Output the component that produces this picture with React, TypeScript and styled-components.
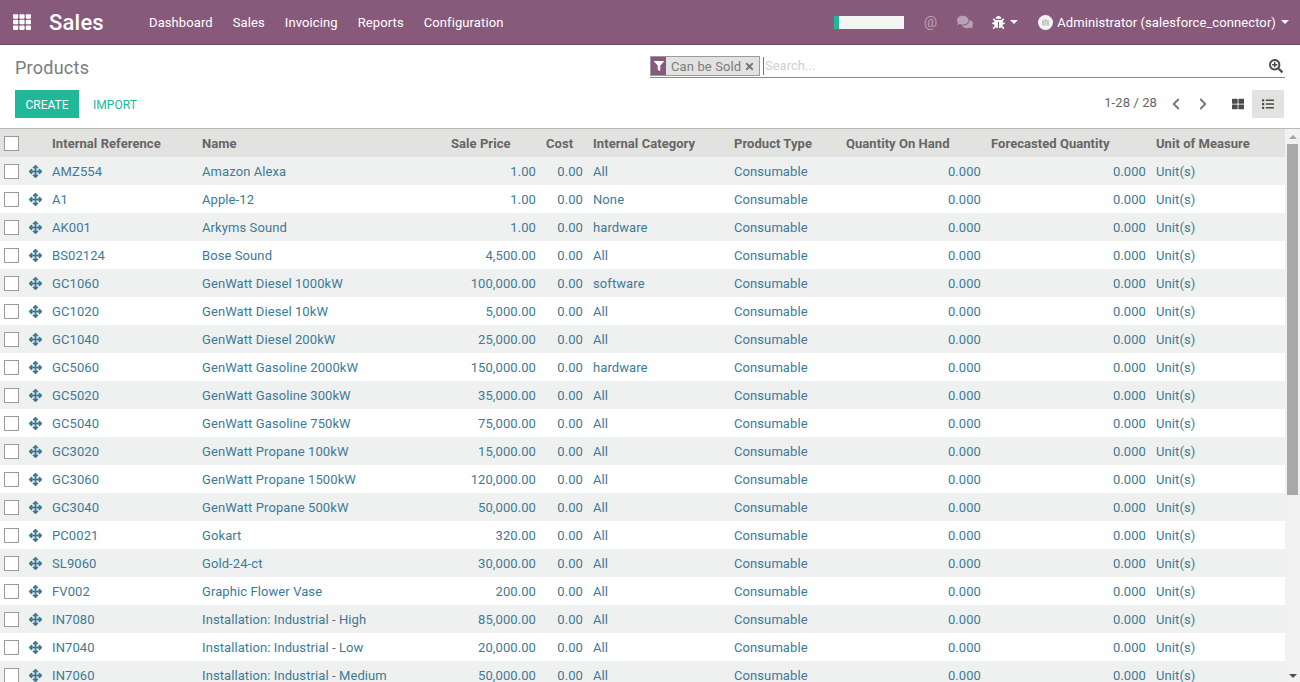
import styled, { createGlobalStyle } from "styled-components";
import {
  FaArrowsAlt,
  FaBug,
  FaCamera,
  FaComments,
  FaFilter,
  FaList,
  FaSearchPlus,
  FaTh,
  FaThLarge,
  FaTimes,
} from "react-icons/fa";
import { ChevronLeft, ChevronRight } from "lucide-react";

const GlobalStyle = createGlobalStyle`
  html, body {
    margin: 0;
    padding: 0;
    height: 100%;
    overflow: hidden;
    background: #ffffff;
    font-family: "Roboto", "Liberation Sans", sans-serif;
    font-size: 13px;
    color: #4c4c4c;
  }
`;

const Page = styled.div`
  display: flex;
  flex-direction: column;
  height: 682px;
  overflow: hidden;
`;

// top bar //
const TopBar = styled.div`
  flex: none;
  height: 44px;
  display: flex;
  align-items: center;
  background: #875a7b;
  border-bottom: 1px solid #6f4a66;
  color: #ffffff;
`;
const AppsButton = styled.div`
  display: flex;
  margin-left: 13px;
  font-size: 18px;
`;
const Brand = styled.div`
  margin-left: 18px;
  width: 100px;
  font-size: 22px;
  font-weight: 500;
  letter-spacing: 0.2px;
`;
const Menu = styled.div`
  display: flex;
  gap: 20px;
`;
const MenuItem = styled.div`
  font-size: 13px;
  letter-spacing: 0.1px;
`;
const TopRight = styled.div`
  display: flex;
  align-items: center;
  margin-left: auto;
`;
const Progress = styled.div`
  width: 65px;
  height: 13px;
  background: #f5f5f3;
  border-left: 5px solid #21b799;
  margin-right: 20px;
`;
const MutedIcon = styled.div<{ $gap: number; $size: number }>`
  display: flex;
  align-items: center;
  font-size: ${(p) => p.$size}px;
  color: #b9a0b4;
  margin-right: ${(p) => p.$gap}px;
`;
const BugButton = styled.div`
  display: flex;
  align-items: center;
  gap: 5px;
  font-size: 13px;
  margin-right: 20px;
`;
const Caret = styled.span`
  width: 0;
  height: 0;
  border-left: 4px solid transparent;
  border-right: 4px solid transparent;
  border-top: 4px solid currentColor;
`;
const Avatar = styled.div`
  width: 15px;
  height: 15px;
  border-radius: 50%;
  background: #f4f2f3;
  color: #c4c4c4;
  font-size: 7px;
  display: flex;
  align-items: center;
  justify-content: center;
  margin-right: 4px;
`;
const UserName = styled.div`
  font-size: 13px;
  letter-spacing: 0.09px;
  margin-right: 5px;
`;
const UserMenu = styled.div`
  display: flex;
  align-items: center;
  margin-right: 11px;
`;

// control panel //
const ControlPanel = styled.div`
  flex: none;
  height: 83px;
  display: grid;
  grid-template-columns: 650px 1fr;
  grid-template-rows: 45px 38px;
  padding: 0 15px;
  box-sizing: border-box;
  width: 100%;
`;
const Title = styled.div`
  font-size: 18px;
  letter-spacing: 0.25px;
  color: #7c7c7c;
  padding-top: 12px;
  line-height: 22px;
`;
const SearchBar = styled.div`
  display: flex;
  align-items: flex-start;
  height: 21px;
  margin: 11px 0 0 -15px;
  border-bottom: 1px solid #8a8a8a;
`;
const Facet = styled.div`
  display: flex;
  align-items: center;
  height: 20px;
  width: 110px;
  box-sizing: border-box;
  background: #e2e2e0;
  border: 1px solid #9b9b9b;
  color: #7c7c7c;
  font-size: 13px;
  letter-spacing: 0.12px;
`;
const FacetIcon = styled.div`
  display: flex;
  align-items: center;
  justify-content: center;
  width: 15px;
  height: 18px;
  background: #875a7b;
  color: #ffffff;
  font-size: 10px;
  margin-right: 5px;
`;
const FacetClose = styled.span`
  display: flex;
  margin-left: 3px;
  font-size: 11px;
  color: #777777;
`;
const SearchInput = styled.div`
  flex: 1;
  margin-left: 3px;
  padding-left: 1px;
  height: 18px;
  margin-top: 1px;
  line-height: 18px;
  border-left: 1px solid #777777;
  color: #cfcfcf;
  font-size: 13px;
`;
const SearchIcon = styled.div`
  display: flex;
  font-size: 14px;
  color: #4c4c4c;
  margin: 3px 2px 0 0;
`;
const Buttons = styled.div`
  display: flex;
  align-items: center;
  height: 28px;
`;
const CreateButton = styled.div`
  width: 64px;
  height: 28px;
  box-sizing: border-box;
  padding-top: 1px;
  background: #21b799;
  color: #ffffff;
  font-size: 12px;
  display: flex;
  align-items: center;
  justify-content: center;
`;
const ImportButton = styled.div`
  margin-left: 14px;
  padding-top: 1px;
  color: #21b799;
  font-size: 12px;
  letter-spacing: 0.05px;
`;
const Tools = styled.div`
  display: flex;
  align-items: center;
  height: 28px;
  margin-right: 1px;
`;
const Pager = styled.div`
  margin-left: auto;
  font-size: 13px;
  letter-spacing: 0.1px;
  color: #666666;
  margin-right: 10px;
  position: relative;
  top: -2px;
`;
const PagerArrow = styled.div`
  display: flex;
  color: #777777;
  margin-right: 9px;
`;
const ViewButton = styled.div<{ $active?: boolean }>`
  width: 32px;
  height: 28px;
  display: flex;
  align-items: center;
  justify-content: center;
  font-size: 12px;
  color: #4c4c4c;
  background: ${(p) => (p.$active ? "#e2e2e0" : "transparent")};
`;
const KanbanButton = styled(ViewButton)`
  box-sizing: border-box;
  padding-left: 3px;
`;

// list //
const ListArea = styled.div`
  flex: 1;
  min-height: 0;
  display: flex;
  border-top: 1px solid #b9b9b9;
  overflow: hidden;
`;
const TableWrap = styled.div`
  flex: 1;
  min-width: 0;
  overflow: hidden;
`;
const Table = styled.table`
  width: 1285px;
  table-layout: fixed;
  border-collapse: collapse;
  font-size: 13px;
`;
const HeadRow = styled.tr`
  height: 28px;
  background: #e2e2e0;
`;
const Th = styled.th`
  padding: 0 5px;
  text-align: left;
  font-weight: 700;
  letter-spacing: 0.05px;
  color: #666666;
  white-space: nowrap;
`;
const Row = styled.tr`
  height: 28px;
  background: #ffffff;
  &:nth-child(odd) {
    background: #eff0f0;
  }
`;
const Td = styled.td<{ $num?: boolean }>`
  padding: 0 5px;
  color: #3c7b97;
  letter-spacing: 0.09px;
  text-align: ${(p) => (p.$num ? "right" : "left")};
  white-space: nowrap;
  overflow: hidden;
`;
const CheckCell = styled.td`
  padding: 0 0 0 4px;
`;
const CheckHead = styled.th`
  padding: 0 0 0 4px;
`;
const Check = styled.div`
  width: 13px;
  height: 13px;
  background: #ffffff;
  border: 1px solid #9a9a9a;
`;
const HandleCell = styled.td`
  padding: 0 0 0 5px;
  color: #3c7b97;
  font-size: 13px;
  line-height: 0;
  svg {
    stroke: currentColor;
    stroke-width: 16;
  }
`;

// scrollbar //
const Scrollbar = styled.div`
  flex: none;
  width: 15px;
  display: flex;
  flex-direction: column;
  align-items: center;
  background: #f1f1f1;
`;
const ArrowUp = styled.div`
  flex: none;
  margin: 6px 0 5px;
  border-left: 4px solid transparent;
  border-right: 4px solid transparent;
  border-bottom: 4px solid #a3a3a3;
`;
const Thumb = styled.div`
  flex: none;
  width: 11px;
  height: 351px;
  background: #a8a8a8;
`;
const ArrowDown = styled.div`
  margin-top: auto;
  margin-bottom: 4px;
  border-left: 4px solid transparent;
  border-right: 4px solid transparent;
  border-top: 4px solid #505050;
`;

const widths = [24, 23, 150, 249, 95, 47, 141, 112, 145, 165, 134];
const headers = [
  "Internal Reference",
  "Name",
  "Sale Price",
  "Cost",
  "Internal Category",
  "Product Type",
  "Quantity On Hand",
  "Forecasted Quantity",
  "Unit of Measure",
];

const products = [
  ["AMZ554", "Amazon Alexa", "1.00", "All"],
  ["A1", "Apple-12", "1.00", "None"],
  ["AK001", "Arkyms Sound", "1.00", "hardware"],
  ["BS02124", "Bose Sound", "4,500.00", "All"],
  ["GC1060", "GenWatt Diesel 1000kW", "100,000.00", "software"],
  ["GC1020", "GenWatt Diesel 10kW", "5,000.00", "All"],
  ["GC1040", "GenWatt Diesel 200kW", "25,000.00", "All"],
  ["GC5060", "GenWatt Gasoline 2000kW", "150,000.00", "hardware"],
  ["GC5020", "GenWatt Gasoline 300kW", "35,000.00", "All"],
  ["GC5040", "GenWatt Gasoline 750kW", "75,000.00", "All"],
  ["GC3020", "GenWatt Propane 100kW", "15,000.00", "All"],
  ["GC3060", "GenWatt Propane 1500kW", "120,000.00", "All"],
  ["GC3040", "GenWatt Propane 500kW", "50,000.00", "All"],
  ["PC0021", "Gokart", "320.00", "All"],
  ["SL9060", "Gold-24-ct", "30,000.00", "All"],
  ["FV002", "Graphic Flower Vase", "200.00", "All"],
  ["IN7080", "Installation: Industrial - High", "85,000.00", "All"],
  ["IN7040", "Installation: Industrial - Low", "20,000.00", "All"],
  ["IN7060", "Installation: Industrial - Medium", "50,000.00", "All"],
];

const App = () => {
  return (
    <Page>
      <GlobalStyle />
      <TopBar>
        <AppsButton>
          <FaTh />
        </AppsButton>
        <Brand>Sales</Brand>
        <Menu>
          <MenuItem>Dashboard</MenuItem>
          <MenuItem>Sales</MenuItem>
          <MenuItem>Invoicing</MenuItem>
          <MenuItem>Reports</MenuItem>
          <MenuItem>Configuration</MenuItem>
        </Menu>
        <TopRight>
          <Progress />
          <MutedIcon $gap={20} $size={15}>
            @
          </MutedIcon>
          <MutedIcon $gap={19} $size={16}>
            <FaComments />
          </MutedIcon>
          <BugButton>
            <FaBug />
            <Caret />
          </BugButton>
          <UserMenu>
            <Avatar>
              <FaCamera />
            </Avatar>
            <UserName>Administrator (salesforce_connector)</UserName>
            <Caret />
          </UserMenu>
        </TopRight>
      </TopBar>

      <ControlPanel>
        <Title>Products</Title>
        <SearchBar>
          <Facet>
            <FacetIcon>
              <FaFilter />
            </FacetIcon>
            Can be Sold
            <FacetClose>
              <FaTimes />
            </FacetClose>
          </Facet>
          <SearchInput>Search...</SearchInput>
          <SearchIcon>
            <FaSearchPlus />
          </SearchIcon>
        </SearchBar>
        <Buttons>
          <CreateButton>CREATE</CreateButton>
          <ImportButton>IMPORT</ImportButton>
        </Buttons>
        <Tools>
          <Pager>1-28 / 28</Pager>
          <PagerArrow>
            <ChevronLeft size={18} strokeWidth={2.5} />
          </PagerArrow>
          <PagerArrow style={{ marginRight: 8 }}>
            <ChevronRight size={18} strokeWidth={2.5} />
          </PagerArrow>
          <KanbanButton>
            <FaThLarge />
          </KanbanButton>
          <ViewButton $active>
            <FaList />
          </ViewButton>
        </Tools>
      </ControlPanel>

      <ListArea>
        <TableWrap>
          <Table>
            <colgroup>
              {widths.map((w, i) => (
                <col key={i} width={w} />
              ))}
            </colgroup>
            <thead>
              <HeadRow>
                <CheckHead>
                  <Check />
                </CheckHead>
                <Th />
                {headers.map((h) => (
                  <Th key={h}>{h}</Th>
                ))}
              </HeadRow>
            </thead>
            <tbody>
              {products.map((p) => (
                <Row key={p[0]}>
                  <CheckCell>
                    <Check />
                  </CheckCell>
                  <HandleCell>
                    <FaArrowsAlt />
                  </HandleCell>
                  <Td>{p[0]}</Td>
                  <Td>{p[1]}</Td>
                  <Td $num>{p[2]}</Td>
                  <Td $num>0.00</Td>
                  <Td>{p[3]}</Td>
                  <Td>Consumable</Td>
                  <Td $num>0.000</Td>
                  <Td $num>0.000</Td>
                  <Td>Unit(s)</Td>
                </Row>
              ))}
            </tbody>
          </Table>
        </TableWrap>
        <Scrollbar>
          <ArrowUp />
          <Thumb />
          <ArrowDown />
        </Scrollbar>
      </ListArea>
    </Page>
  );
};

export default App;
